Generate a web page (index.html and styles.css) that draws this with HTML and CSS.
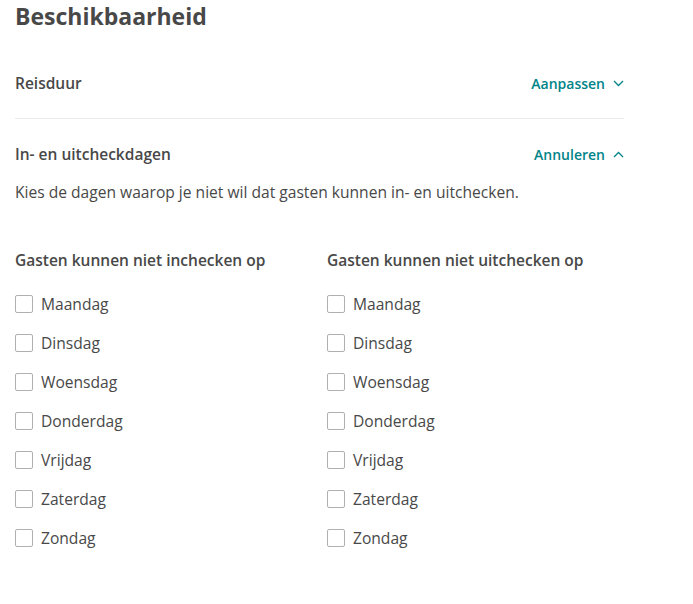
FILE: index.html
```html
<!DOCTYPE html>
<html lang="nl">
  <head>
    <meta charset="UTF-8" />
    <meta name="viewport" content="width=device-width, initial-scale=1.0" />
    <title>Beschikbaarheid</title>
    <link rel="stylesheet" href="styles.css">
  </head>
  <body>
    <div class="panel">
      <h1>Beschikbaarheid</h1>

      <div class="section">
        <div class="section-head">
          <span class="section-title">Reisduur</span>
          <a class="toggle" href="#">Aanpassen
            <svg width="11" height="7" viewBox="0 0 11 7"><path d="M1 1l4.5 4.5L10 1" fill="none" stroke="currentColor" stroke-width="1.3"/></svg>
          </a>
        </div>
      </div>

      <div class="section">
        <div class="section-head">
          <span class="section-title">In- en uitcheckdagen</span>
          <a class="toggle" href="#">Annuleren
            <svg width="11" height="7" viewBox="0 0 11 7"><path d="M1 6l4.5-4.5L10 6" fill="none" stroke="currentColor" stroke-width="1.3"/></svg>
          </a>
        </div>
        <p class="intro">Kies de dagen waarop je niet wil dat gasten kunnen in- en uitchecken.</p>

        <div class="columns">
          <div class="col">
            <h3>Gasten kunnen niet inchecken op</h3>
            <label class="check"><input type="checkbox"><span class="box"></span>Maandag</label>
            <label class="check"><input type="checkbox"><span class="box"></span>Dinsdag</label>
            <label class="check"><input type="checkbox"><span class="box"></span>Woensdag</label>
            <label class="check"><input type="checkbox"><span class="box"></span>Donderdag</label>
            <label class="check"><input type="checkbox"><span class="box"></span>Vrĳdag</label>
            <label class="check"><input type="checkbox"><span class="box"></span>Zaterdag</label>
            <label class="check"><input type="checkbox"><span class="box"></span>Zondag</label>
          </div>
          <div class="col">
            <h3>Gasten kunnen niet uitchecken op</h3>
            <label class="check"><input type="checkbox"><span class="box"></span>Maandag</label>
            <label class="check"><input type="checkbox"><span class="box"></span>Dinsdag</label>
            <label class="check"><input type="checkbox"><span class="box"></span>Woensdag</label>
            <label class="check"><input type="checkbox"><span class="box"></span>Donderdag</label>
            <label class="check"><input type="checkbox"><span class="box"></span>Vrĳdag</label>
            <label class="check"><input type="checkbox"><span class="box"></span>Zaterdag</label>
            <label class="check"><input type="checkbox"><span class="box"></span>Zondag</label>
          </div>
        </div>
      </div>
    </div>
  </body>
</html>
```

FILE: styles.css
```css
body {
  margin: 0;
  font-family: "Open Sans", Lato, sans-serif;
  color: #484848;
  background-color: #fff;
}

.panel {
  width: 609px;
  padding: 0 15px;
}

h1 {
  margin: 0;
  padding-top: 2px;
  font-size: 23px;
  line-height: 28px;
  font-weight: 700;
}

.section + .section {
  border-top: 1px solid #ebebeb;
}

.section-head {
  display: flex;
  justify-content: space-between;
  align-items: center;
  height: 34px;
}

.section:first-of-type .section-head {
  margin: 36px 0 18px;
}

.section:last-of-type .section-head {
  margin: 18px 0 0;
}

.section-title {
  font-size: 15.5px;
  font-weight: 600;
}

.toggle {
  display: flex;
  align-items: center;
  gap: 8px;
  color: #008489;
  font-size: 14px;
  font-weight: 600;
  text-decoration: none;
}

.intro {
  margin: 10px 0 0;
  font-size: 15.6px;
  line-height: 22px;
}

.columns {
  display: grid;
  grid-template-columns: 312px 1fr;
  margin-top: 46px;
}

.col h3 {
  margin: 0 0 13px;
  font-size: 15.5px;
  line-height: 22px;
  font-weight: 600;
}

.check {
  display: flex;
  align-items: center;
  height: 39px;
  font-size: 15.6px;
}

.check input {
  display: none;
}

.box {
  width: 16px;
  height: 16px;
  border: 1px solid #b0b0b0;
  border-radius: 2px;
  margin-right: 8px;
}
```
